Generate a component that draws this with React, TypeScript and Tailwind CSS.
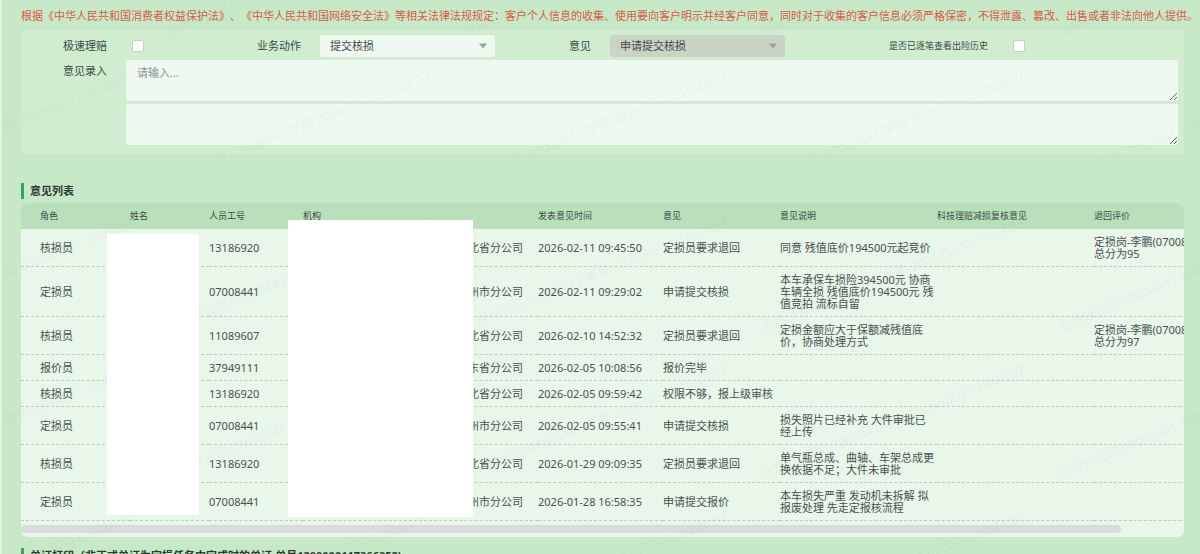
import React from "react";

const FONT = "font-['Noto_Sans','Noto_Sans_CJK_SC',sans-serif]";

type Opinion = {
  role: string;
  id: string;
  org: string;
  time: string;
  opinion: string;
  note: string;
  review: string;
};

const COLUMNS = [
  { title: "角色", width: "w-[109px]" },
  { title: "姓名", width: "w-[79px]" },
  { title: "人员工号", width: "w-[94px]" },
  { title: "机构", width: "w-[235px]" },
  { title: "发表意见时间", width: "w-[125px]" },
  { title: "意见", width: "w-[117px]" },
  { title: "意见说明", width: "w-[157px]" },
  { title: "科技理赔减损复核意见", width: "w-[157px]" },
  { title: "退回评价", width: "w-[157px]" },
];

const ROWS: Opinion[] = [
  { role: "核损员", id: "13186920", org: "北省分公司", time: "2026-02-11 09:45:50", opinion: "定损员要求退回", note: "同意 残值底价194500元起竞价", review: "定损岗-李鹏(07008441)\n总分为95" },
  { role: "定损员", id: "07008441", org: "州市分公司", time: "2026-02-11 09:29:02", opinion: "申请提交核损", note: "本车承保车损险394500元 协商车辆全损 残值底价194500元 残值竞拍 流标自留", review: "" },
  { role: "核损员", id: "11089607", org: "北省分公司", time: "2026-02-10 14:52:32", opinion: "定损员要求退回", note: "定损金额应大于保额减残值底价，协商处理方式", review: "定损岗-李鹏(07008441)\n总分为97" },
  { role: "报价员", id: "37949111", org: "东省分公司", time: "2026-02-05 10:08:56", opinion: "报价完毕", note: "", review: "" },
  { role: "核损员", id: "13186920", org: "北省分公司", time: "2026-02-05 09:59:42", opinion: "权限不够，报上级审核", note: "", review: "" },
  { role: "定损员", id: "07008441", org: "州市分公司", time: "2026-02-05 09:55:41", opinion: "申请提交核损", note: "损失照片已经补充 大件审批已经上传", review: "" },
  { role: "核损员", id: "13186920", org: "北省分公司", time: "2026-01-29 09:09:35", opinion: "定损员要求退回", note: "单气瓶总成、曲轴、车架总成更换依据不足；大件未审批", review: "" },
  { role: "定损员", id: "07008441", org: "州市分公司", time: "2026-01-28 16:58:35", opinion: "申请提交报价", note: "本车损失严重 发动机未拆解 拟报废处理 先走定报核流程", review: "" },
];

function Watermark() {
  return (
    <svg aria-hidden="true" className="pointer-events-none absolute inset-0 h-full w-full">
      <defs>
        <pattern id="wm" x="155" y="50" width="297" height="147" patternUnits="userSpaceOnUse">
          <text x="12" y="135" fontSize="13" fill="#1f4030" fillOpacity="0.035" transform="rotate(-22 12 135)">
            沧州分公司 07008441 李鹏 2026-02-11 10:24:57
          </text>
        </pattern>
      </defs>
      <rect width="100%" height="100%" fill="url(#wm)" />
    </svg>
  );
}

function Select({ id, value, disabled }: { id: string; value: string; disabled?: boolean }) {
  return (
    <div className="relative">
      <select
        id={id}
        disabled={disabled}
        className={
          "block h-[22px] w-full appearance-none rounded-[3px] pl-[10px] text-[11px] leading-[22px] text-[#3c4a44] opacity-100 " +
          (disabled ? "bg-[#cad4c5]" : "bg-[#f0f9f1]")
        }
      >
        <option>{value}</option>
      </select>
      <svg className="pointer-events-none absolute right-2 top-2 h-[6px] w-2" viewBox="0 0 8 6">
        <path d="M0 0.5h8L4 5.5z" fill="#93a59b" />
      </svg>
    </div>
  );
}

function Checkbox({ id }: { id: string }) {
  return (
    <input
      id={id}
      type="checkbox"
      className="ml-[6px] block size-3 appearance-none rounded-[2px] border border-[#c3cfc5] bg-white checked:bg-[#3f9d6b]"
    />
  );
}

function SectionTitle({ children }: { children: React.ReactNode }) {
  return (
    <h2 className="flex items-center gap-[6px] whitespace-nowrap text-[11px] font-bold leading-4 text-[#2d3b34]">
      <span className="h-4 w-[3px] bg-[#3f9f68]" />
      {children}
    </h2>
  );
}

export default function App() {
  return (
    <div className={"relative h-screen overflow-hidden border-l-2 border-[#e4f4e4] bg-[#c8e9c8] pl-[19px] pr-4 text-[11px] text-[#47524d] " + FONT}>
      <p className="mt-2 whitespace-nowrap leading-4 text-[#d95b45] [text-spacing-trim:space-all]">
        根据《中华人民共和国消费者权益保护法》、《中华人民共和国网络安全法》等相关法律法规规定：客户个人信息的收集、使用要向客户明示并经客户同意，同时对于收集的客户信息必须严格保密，不得泄露、篡改、出售或者非法向他人提供。
      </p>

      <form className="mt-1 rounded-[5px] border-y border-[#c5e5c5] bg-[#d0edd0] pb-[10px] pt-[6px] text-[#3c4a44]">
        <div className="grid grid-cols-[105fr_89fr_105fr_175fr_115fr_175fr_222fr_177fr] items-center">
          <label htmlFor="fast" className="pr-[19px] text-right">极速理赔</label>
          <Checkbox id="fast" />
          <label htmlFor="action" className="pr-[19px] text-right">业务动作</label>
          <Select id="action" value="提交核损" />
          <label htmlFor="opinion" className="pr-[19px] text-right">意见</label>
          <Select id="opinion" value="申请提交核损" disabled />
          <label htmlFor="history" className="pr-[19px] text-right text-[9px]">是否已逐笔查看出险历史</label>
          <Checkbox id="history" />
        </div>
        <div className="mt-[3px] grid grid-cols-[105fr_1058fr]">
          <label htmlFor="entry" className="pr-[19px] pt-[3px] text-right leading-4">意见录入</label>
          <div className="flex flex-col gap-[3px] pr-[6px]">
            <textarea
              id="entry"
              placeholder="请输入..."
              className="block h-[41px] w-full rounded-[3px] bg-[#f0f9f1] px-[11px] py-[5px] leading-4 placeholder:text-[#8a9690]"
            />
            <textarea aria-label="意见补充" className="block h-[41px] w-full rounded-[3px] bg-[#f0f9f1] px-[11px] py-[5px] leading-4" />
          </div>
        </div>
      </form>

      <div className="mt-[27px]">
        <SectionTitle>意见列表</SectionTitle>
      </div>

      <section className="relative mt-1">
        <div className="overflow-hidden rounded-[7px] bg-[#e9f6ea]">
          <table className="w-full min-w-[1230px] table-fixed border-separate border-spacing-0 text-left">
            <thead>
              <tr className="bg-[#badfbb] text-[9px] leading-[12px] text-[#3c4a44]">
                {COLUMNS.map((c) => (
                  <th key={c.title} className={"py-[7px] font-normal first:pl-[19px] " + c.width}>{c.title}</th>
                ))}
              </tr>
            </thead>
            <tbody>
              {ROWS.map((r) => (
                <tr
                  key={r.time}
                  className="leading-[12px] [&>td]:border-b [&>td]:border-dashed [&>td]:border-[#bccfc0] [&>td]:pb-[6px] [&>td]:pt-[7px]"
                >
                  <td className="pl-[19px]">{r.role}</td>
                  <td />
                  <td>{r.id}</td>
                  <td className="pr-[15px] text-right">{r.org}</td>
                  <td className="whitespace-nowrap">{r.time}</td>
                  <td className="whitespace-nowrap">{r.opinion}</td>
                  <td className="pr-[2px]">{r.note}</td>
                  <td />
                  <td className="whitespace-pre">{r.review}</td>
                </tr>
              ))}
            </tbody>
          </table>
          <div className="pb-1 pt-1">
            <div className="h-2 w-[94.6%] rounded-full bg-[#dadbdb]" />
          </div>
        </div>
        <div className="absolute left-[86px] top-[31px] z-10 h-[281px] w-[92px] bg-white" />
        <div className="absolute left-[267px] top-[17px] z-10 h-[297px] w-[185px] bg-white" />
      </section>

      <div className="mt-[11px]">
        <SectionTitle>单证打印（非正式单证为定损任务中完成时的单证,单号1200000117366352)</SectionTitle>
      </div>
      <Watermark />
    </div>
  );
}
